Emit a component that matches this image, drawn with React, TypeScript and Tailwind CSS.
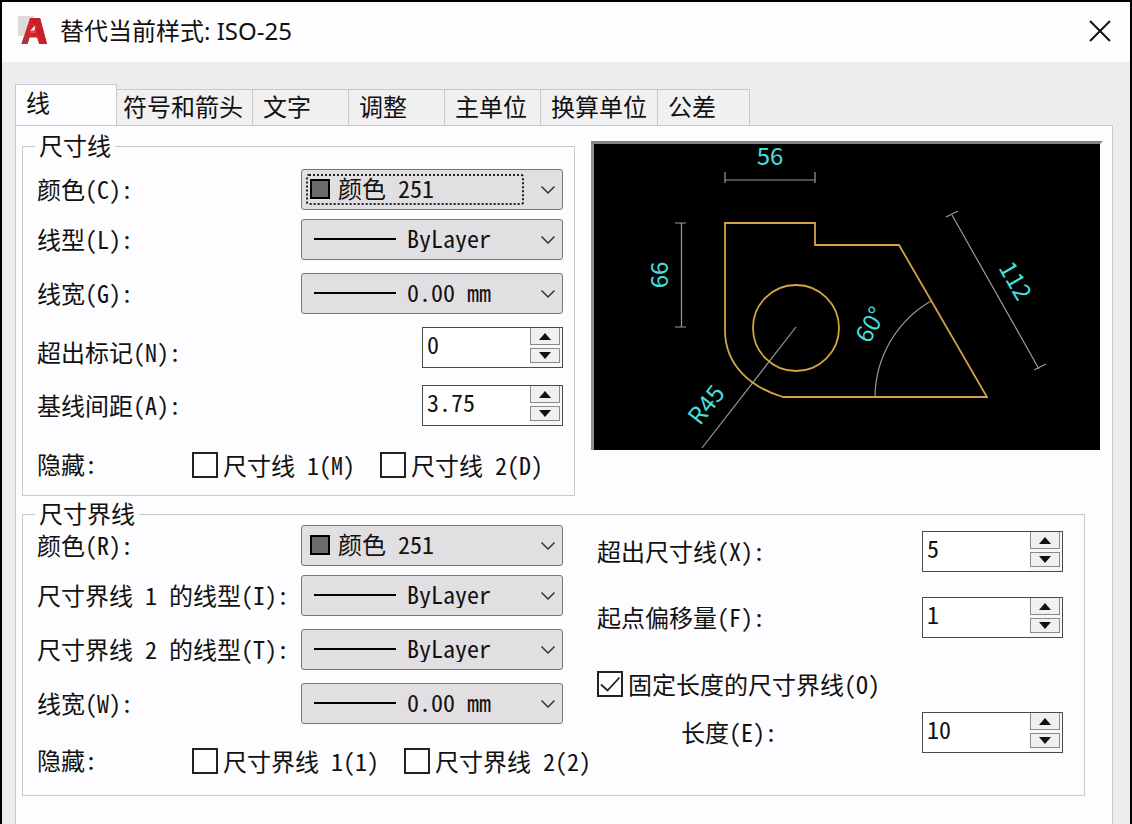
import { useId, useState } from "react";
import type { ReactNode } from "react";

const tabs = [
  { title: "符号和箭头", className: "px-[6px] min-w-[136px]" },
  { title: "文字", className: "px-[10px] min-w-24" },
  { title: "调整", className: "px-[10px] min-w-24" },
  { title: "主单位", className: "px-[10px] min-w-24" },
  { title: "换算单位", className: "px-[10px] min-w-24" },
  { title: "公差", className: "px-[10px] min-w-[92px]" },
];

const Logo = () => (
  <svg width="30" height="30" viewBox="0 0 30 30" aria-hidden="true">
    <rect x="0" y="0" width="16" height="20" fill="#dedada" />
    <path d="M3.5 28 L12 2 H22 L29 28 H21 L19 21.5 H11.5 L9.5 28 Z" fill="#d3222a" />
    <path d="M12 2 H22 L29 28 H25.5 Z" fill="#c81f27" />
    <path d="M11.6 17 L16 8 L18 17 Z" fill="#e04a4c" />
    <path d="M12 15 L17.5 9.5 L16.5 14 Z" fill="#fff" />
    <path d="M3.5 28 L5.5 21.5 L11.5 21.5 L9.5 28 Z" fill="#a9373a" />
  </svg>
);

const Chevron = () => (
  <svg
    width="16"
    height="10"
    viewBox="0 0 16 10"
    className="pointer-events-none col-start-1 row-start-1 mr-[6px] justify-self-end"
    aria-hidden="true"
  >
    <path d="M1.5 1.5 L8 8 L14.5 1.5" fill="none" stroke="#333" strokeWidth="1.5" />
  </svg>
);

type ComboProps = {
  id: string;
  value: string;
  options: string[];
  swatch?: boolean;
  focused?: boolean;
};

const Combo = ({ id, value, options, swatch, focused }: ComboProps) => (
  <div className="grid h-[41px] w-[262px] shrink-0 items-center rounded-[3px] border border-[#77777a] bg-[#e1dfe1]">
    <select
      id={id}
      defaultValue={value}
      className={
        swatch
          ? "col-start-1 row-start-1 h-full w-full appearance-none bg-transparent pr-8 pb-1 pl-9 outline-none"
          : "col-start-1 row-start-1 h-full w-full appearance-none bg-transparent pr-8 pb-1 pl-[105px] outline-none"
      }
    >
      {options.map((option) => (
        <option key={option}>{option}</option>
      ))}
    </select>
    {swatch ? (
      <span className="pointer-events-none col-start-1 row-start-1 mb-[2px] ml-2 h-5 w-5 border-2 border-black bg-[#6b6b6b]" />
    ) : (
      <span className="pointer-events-none col-start-1 row-start-1 mb-[2px] ml-3 h-[2px] w-[82px] bg-black" />
    )}
    {focused && (
      <span className="pointer-events-none col-start-1 row-start-1 ml-1 h-[31px] w-[218px] rounded-[3px] border-2 border-dotted border-[#222]" />
    )}
    <Chevron />
  </div>
);

type SpinnerProps = { id: string; initial: number; step?: number };

const Spinner = ({ id, initial, step = 1 }: SpinnerProps) => {
  const [value, setValue] = useState(String(initial));
  const change = (delta: number) => setValue(String(Math.max(0, (Number(value) || 0) + delta)));

  return (
    <div className="flex h-[41px] w-[141px] shrink-0 border border-[#4a4a4a] bg-white">
      <input
        id={id}
        type="text"
        value={value}
        onChange={(e) => setValue(e.target.value)}
        className="min-w-0 flex-1 bg-transparent pb-2 pl-1 outline-none"
      />
      <div className="flex w-8 flex-col justify-between bg-[#f8f7f8] pr-[2px] pb-1">
        <button
          type="button"
          aria-label="增加"
          onClick={() => change(step)}
          className="flex h-[17px] items-center justify-center border border-t-0 border-[#8a8a8a] bg-[#f1f0f1]"
        >
          <svg width="12" height="7" viewBox="0 0 12 7" aria-hidden="true">
            <path d="M6 0 L12 7 H0 Z" fill="#111" />
          </svg>
        </button>
        <button
          type="button"
          aria-label="减少"
          onClick={() => change(-step)}
          className="flex h-[15px] items-center justify-center border border-[#8a8a8a] bg-[#f1f0f1]"
        >
          <svg width="12" height="7" viewBox="0 0 12 7" aria-hidden="true">
            <path d="M0 0 H12 L6 7 Z" fill="#111" />
          </svg>
        </button>
      </div>
    </div>
  );
};

type CheckProps = { label: string; checked?: boolean };

const Check = ({ label, checked }: CheckProps) => (
  <label className="flex items-center gap-[5px] whitespace-nowrap">
    <span className="grid">
      <input
        type="checkbox"
        defaultChecked={checked}
        className="peer col-start-1 row-start-1 h-[26px] w-[26px] appearance-none border-2 border-[#222] bg-white"
      />
      <svg
        width="26"
        height="26"
        viewBox="0 0 26 26"
        className="pointer-events-none invisible col-start-1 row-start-1 peer-checked:visible"
        aria-hidden="true"
      >
        <path d="M4 13.5 L10.5 19.5 L22.5 6.5" fill="none" stroke="#222" strokeWidth="1.8" />
      </svg>
    </span>
    {label}
  </label>
);

type FieldProps = {
  label: string;
  className?: string;
  children: (id: string) => ReactNode;
};

const Field = ({ label, className = "items-center", children }: FieldProps) => {
  const id = useId();
  return (
    <div className={`flex justify-between ${className}`}>
      <label htmlFor={id} className="pb-[2px] whitespace-nowrap">
        {label}
      </label>
      {children(id)}
    </div>
  );
};

const Preview = () => (
  <div className="mt-[6px] self-start border-t-[3px] border-r-[3px] border-l-[3px] border-t-[#808583] border-r-transparent border-l-[#8b8f8d] bg-clip-padding">
    <svg
      viewBox="594 144 506 306"
      className="block w-full overflow-visible bg-black"
      role="img"
      aria-label="预览"
    >
      <g fill="none" stroke="#9a9a9a" strokeWidth="1.2">
        <path d="M725 172 V183 M815 172 V183 M725 180 H815" />
        <path d="M675 223 H686 M675 327 H686 M681.5 223 V327" />
        <path d="M946 217 L958 211 M1034 370 L1046 364 M952 215 L1039 369" />
        <path d="M796 327 L702 448" />
        <path d="M931 301 A112 112 0 0 0 875 397" />
      </g>
      <g fill="none" stroke="#d2a444" strokeWidth="1.8">
        <path d="M725 223 H815 V245 H899 L987 397 H783 C750 387 725 365 725 330 Z" />
        <circle cx="796" cy="328" r="43" />
      </g>
      <g
        fill="#46dfdb"
        fontSize="24"
        textAnchor="middle"
        className="font-['Noto_Sans_CJK_SC',sans-serif] [font-feature-settings:normal]"
      >
        <text x="770" y="165">
          56
        </text>
        <text transform="translate(668 275) rotate(-90)">66</text>
        <text transform="translate(1008 285) rotate(60)">112</text>
        <text transform="translate(878 329) rotate(-60)">60°</text>
        <text transform="translate(713 410) rotate(-52)">R45</text>
      </g>
    </svg>
  </div>
);

const colors = ["颜色 251", "ByBlock"];
const lineTypes = ["ByLayer", "ByBlock"];
const lineWeights = ["0.00 mm", "0.05 mm"];

const App = () => {
  return (
    <div className="flex min-h-screen flex-col border-x-2 border-t-2 border-black bg-[#eeecee] font-['Noto_Sans_CJK_SC',sans-serif] text-2xl leading-7 text-[#111] [font-feature-settings:'hwid']">
      <header className="flex h-[60px] items-center bg-[#fffeff] pr-[19px] pb-[2px] pl-4">
        <Logo />
        <h1 className="ml-3 flex-1 font-['Noto_Sans','Noto_Sans_CJK_SC',sans-serif] [font-feature-settings:normal]">
          替代当前样式: ISO-25
        </h1>
        <button type="button" aria-label="关闭">
          <svg width="22" height="22" viewBox="0 0 22 22" aria-hidden="true">
            <path d="M1 1 L21 21 M21 1 L1 21" stroke="#111" strokeWidth="2" />
          </svg>
        </button>
      </header>

      <main className="flex flex-1 flex-col pt-[22px] pr-[17px] pl-[13px]">
        <div role="tablist" className="flex items-end">
          <button
            type="button"
            role="tab"
            aria-selected="true"
            className="-mb-px h-[42px] w-[102px] border border-b-0 border-[#c9c8cc] bg-[#fdfcfe] px-[10px] pb-2 text-left"
          >
            线
          </button>
          {tabs.map(({ title, className }) => (
            <button
              key={title}
              type="button"
              role="tab"
              aria-selected="false"
              className={`h-9 border-t border-r border-[#c9c8cc] bg-[#f1f0f1] pb-1 text-left whitespace-nowrap ${className}`}
            >
              {title}
            </button>
          ))}
        </div>

        <section className="flex-1 border border-b-0 border-[#c9c8cc] bg-[#fdfcfe] pt-[9px] pr-[9px] pb-7 pl-[6px]">
          <div className="grid grid-cols-[553fr_512fr] gap-4">
            <fieldset className="min-w-0 border border-[#c9c8cc] pt-3 pr-[11px] pb-[15px] pl-[14px]">
              <legend className="-ml-[2px] px-1 pb-[2px] leading-5">尺寸线</legend>
              <Field label="颜色(C):">
                {(id) => <Combo id={id} value="颜色 251" options={colors} swatch focused />}
              </Field>
              <Field label="线型(L):" className="mt-[9px] items-center">
                {(id) => <Combo id={id} value="ByLayer" options={lineTypes} />}
              </Field>
              <Field label="线宽(G):" className="mt-[13px] items-center">
                {(id) => <Combo id={id} value="0.00 mm" options={lineWeights} />}
              </Field>
              <Field label="超出标记(N):" className="mt-[13px] items-end">
                {(id) => <Spinner id={id} initial={0} />}
              </Field>
              <Field label="基线间距(A):" className="mt-[17px] items-center">
                {(id) => <Spinner id={id} initial={3.75} step={0.25} />}
              </Field>
              <div className="mt-6 flex items-center gap-[25px]">
                <span className="w-[130px] pb-[2px]">隐藏:</span>
                <Check label="尺寸线 1(M)" />
                <Check label="尺寸线 2(D)" />
              </div>
            </fieldset>
            <Preview />
          </div>

          <fieldset className="mt-[7px] mr-[18px] grid grid-cols-[560fr_466fr] border border-[#c9c8cc] pr-[21px] pb-[19px] pl-[14px]">
            <legend className="-ml-[2px] px-1 pb-[2px] leading-5">尺寸界线</legend>
            <div>
              <Field label="颜色(R):" className="items-center pr-[34px]">
                {(id) => <Combo id={id} value="颜色 251" options={colors} swatch />}
              </Field>
              <Field label="尺寸界线 1 的线型(I):" className="mt-[9px] items-center pr-[34px]">
                {(id) => <Combo id={id} value="ByLayer" options={lineTypes} />}
              </Field>
              <Field label="尺寸界线 2 的线型(T):" className="mt-[13px] items-center pr-[34px]">
                {(id) => <Combo id={id} value="ByLayer" options={lineTypes} />}
              </Field>
              <Field label="线宽(W):" className="mt-[13px] items-center pr-[34px]">
                {(id) => <Combo id={id} value="0.00 mm" options={lineWeights} />}
              </Field>
              <div className="mt-[22px] flex items-center gap-[25px]">
                <span className="w-[130px] pb-[2px]">隐藏:</span>
                <Check label="尺寸界线 1(1)" />
                <Check label="尺寸界线 2(2)" />
              </div>
            </div>
            <div className="pt-[6px]">
              <Field label="超出尺寸线(X):">{(id) => <Spinner id={id} initial={5} />}</Field>
              <Field label="起点偏移量(F):" className="mt-[25px] items-center">
                {(id) => <Spinner id={id} initial={1} />}
              </Field>
              <div className="mt-8">
                <Check label="固定长度的尺寸界线(O)" checked />
              </div>
              <Field label="长度(E):" className="mt-[14px] items-center pl-[84px]">
                {(id) => <Spinner id={id} initial={10} />}
              </Field>
            </div>
          </fieldset>
        </section>
      </main>
    </div>
  );
};

export default App;
